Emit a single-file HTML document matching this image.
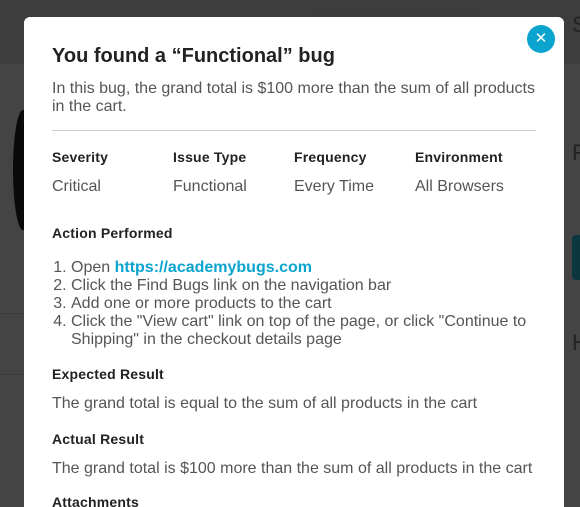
<!DOCTYPE html>
<html style="overflow:hidden"><head><style>
*{margin:0;padding:0;box-sizing:border-box}
html,body{width:580px;height:507px;overflow:hidden}
body{background:#444;font-family:"Liberation Sans",Arial,sans-serif;position:relative}
.bgtop{position:absolute;left:0;top:0;width:580px;height:64px;background:#3d3d3d}
.blob{position:absolute;left:13px;top:110px;width:20px;height:120px;background:#0a0a0a;border-radius:50% 0 0 50%}
.line1{position:absolute;left:0;top:313px;width:24px;height:1px;background:#3a3a3a}
.line2{position:absolute;left:0;top:374px;width:24px;height:1px;background:#3a3a3a}
.rt{position:absolute;left:572px;color:#222;font-size:22px}
.rbox{position:absolute;left:314px;top:12px;width:168px;height:10px;border:1px solid #3a3a3a;border-bottom:none}
.modal{position:absolute;left:24px;top:17px;width:540px;height:490px;background:#fff;border-radius:6px 6px 0 0}
.close{position:absolute;left:527px;top:25px;width:28px;height:28px;border-radius:50%;background:#0aa4cf;color:#fff;text-align:center;font-size:15px;line-height:28px}
.c{position:absolute;left:52px;color:#555}
h1{position:absolute;left:52px;top:45px;font-size:20px;font-weight:bold;color:#222}
.desc{top:80px;font-size:16px;line-height:18px;width:490px}
.hr{position:absolute;left:52px;top:130px;width:484px;height:1px;background:#ccc}
.h{font-size:14px;letter-spacing:0.2px;font-weight:bold;color:#222;position:absolute}
.v{font-size:16px;color:#555;position:absolute}
ol{position:absolute;left:52px;top:259px;font-size:16px;line-height:18px;color:#555;padding-left:19px;width:490px}
a{color:#0aa4cf;font-weight:bold;text-decoration:none}
</style></head><body>
<div class="bgtop"></div>
<div class="blob"></div>
<div class="line1"></div><div class="line2"></div>
<div class="rbox"></div>
<div class="rt" style="top:12px">S</div>
<div class="rt" style="top:140px">F</div>
<div class="rt" style="top:330px">H</div>
<div style="position:absolute;left:572px;top:235px;width:10px;height:45px;background:#0b3840;border-radius:4px 0 0 4px"></div>
<div class="modal"></div>
<div class="close">✕</div>
<h1>You found a “Functional” bug</h1>
<div class="c desc">In this bug, the grand total is $100 more than the sum of all products in the cart.</div>
<div class="hr"></div>
<div class="h" style="left:52px;top:149px">Severity</div>
<div class="h" style="left:173px;top:149px">Issue Type</div>
<div class="h" style="left:294px;top:149px">Frequency</div>
<div class="h" style="left:415px;top:149px">Environment</div>
<div class="v" style="left:52px;top:178px">Critical</div>
<div class="v" style="left:173px;top:178px">Functional</div>
<div class="v" style="left:294px;top:178px">Every Time</div>
<div class="v" style="left:415px;top:178px">All Browsers</div>
<div class="h" style="left:52px;top:225px">Action Performed</div>
<ol>
<li>Open <a>https://academybugs.com</a></li>
<li>Click the Find Bugs link on the navigation bar</li>
<li>Add one or more products to the cart</li>
<li>Click the "View cart" link on top of the page, or click "Continue to Shipping" in the checkout details page</li>
</ol>
<div class="h" style="left:52px;top:366px">Expected Result</div>
<div class="v" style="left:52px;top:395px">The grand total is equal to the sum of all products in the cart</div>
<div class="h" style="left:52px;top:431px">Actual Result</div>
<div class="v" style="left:52px;top:460px">The grand total is $100 more than the sum of all products in the cart</div>
<div class="h" style="left:52px;top:494px">Attachments</div>
</body></html>
